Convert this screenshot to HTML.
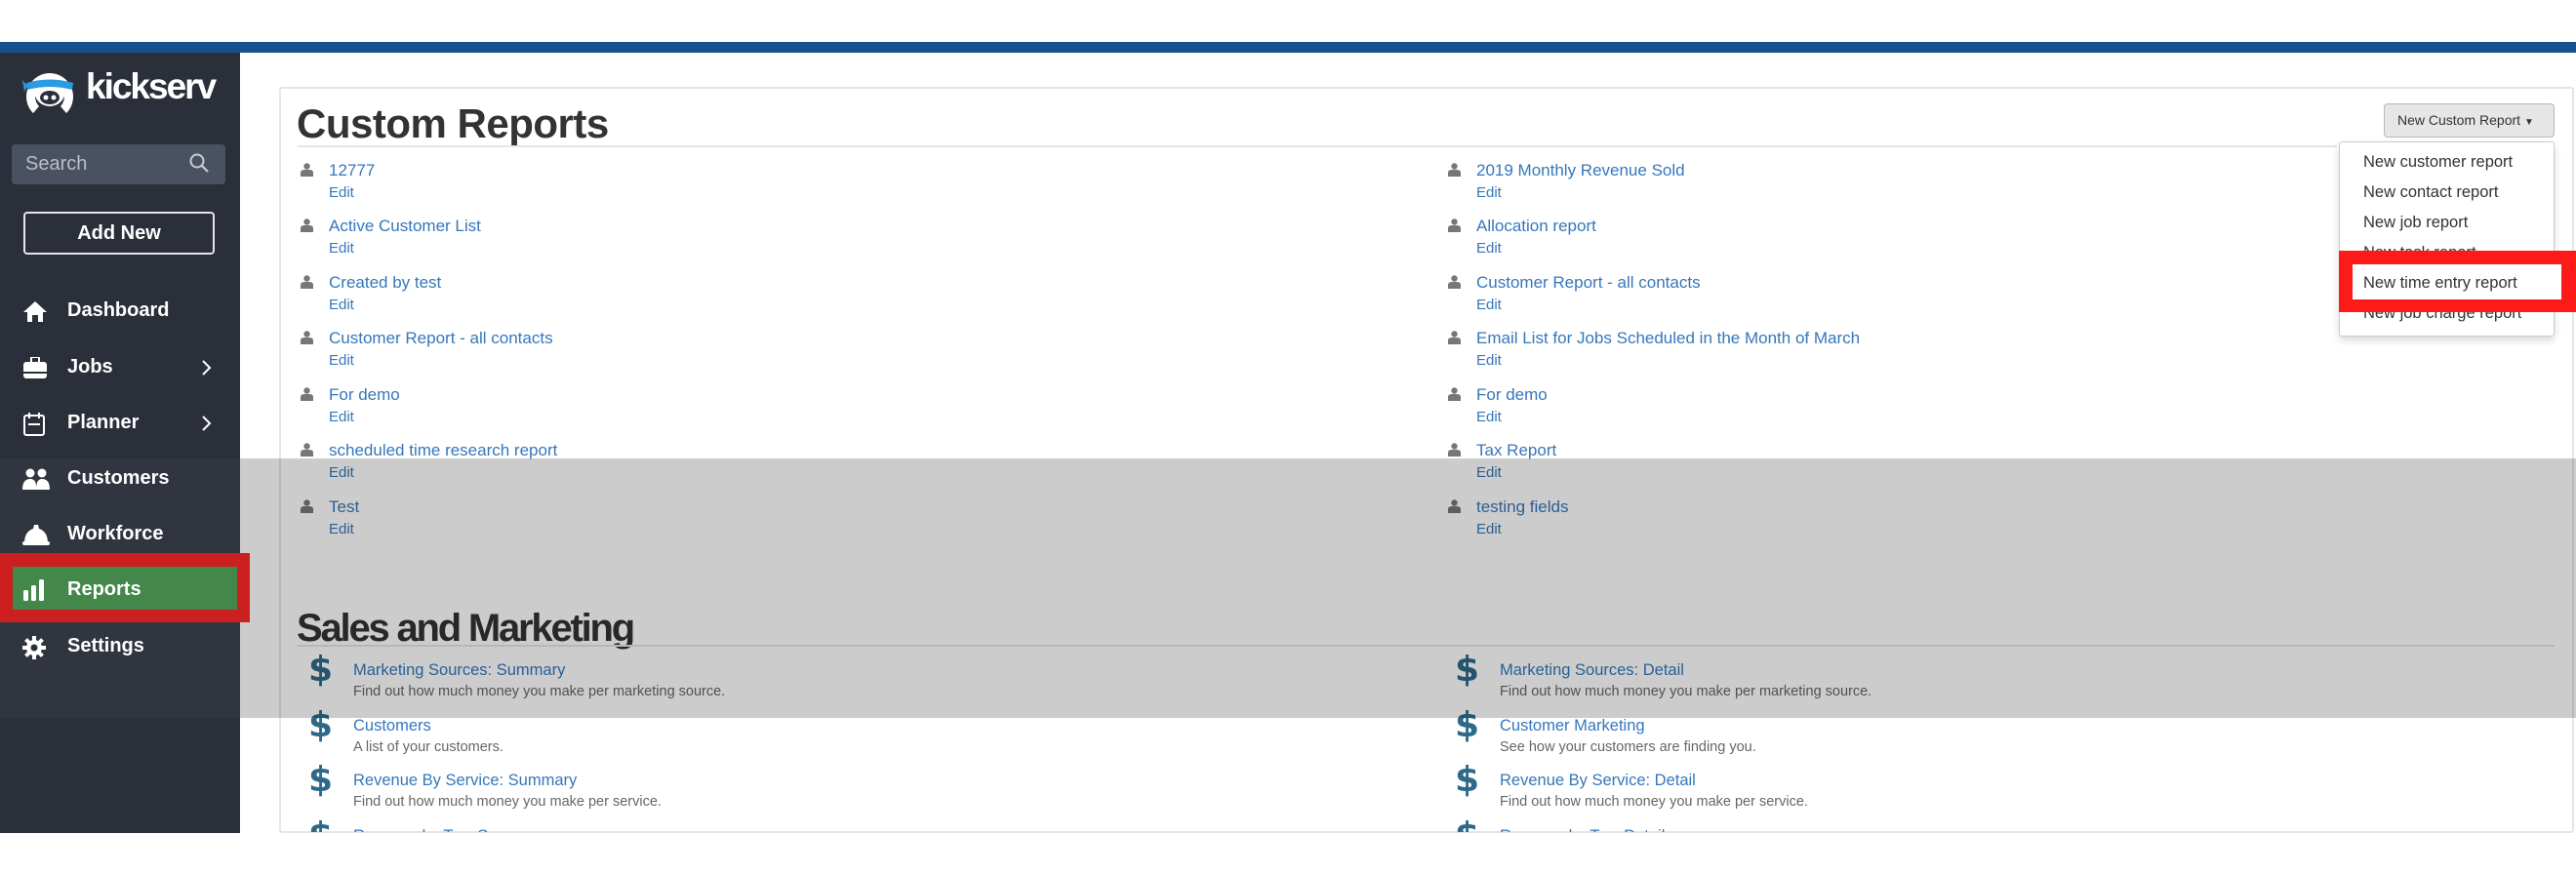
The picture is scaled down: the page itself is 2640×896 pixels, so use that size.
<!DOCTYPE html>
<html><head><meta charset="utf-8"><style>
*{margin:0;padding:0;box-sizing:border-box}
body{width:2640px;height:896px;position:relative;overflow:hidden;background:#fff;font-family:"Liberation Sans",sans-serif}
.abs{position:absolute}
#bar{left:0;top:43px;width:2640px;height:11px;background:#15508f}
#side{left:0;top:54px;width:246px;height:800px;background:#2a2f3a}
.nav{position:absolute;left:0;width:246px;height:40px;color:#fff;font-size:20px;font-weight:bold;line-height:40px}
.nav span{position:absolute;left:69px}
.nav svg{position:absolute;left:23px;top:10px}
.nav .chev{position:absolute;left:206px;top:12px}
#panel{left:286px;top:89px;width:2352px;height:765px;border:2px solid #e3e5ee;border-radius:3px;background:#fff}
h1{position:absolute;font-size:40px;font-weight:bold;color:#333;letter-spacing:-0.5px}
.rule{position:absolute;height:2px;background:#e5e5e5}
.it{position:absolute}
.it .p{position:absolute;left:0;top:-9px}
.it a{position:absolute;left:29px;top:-11px;white-space:nowrap;font-size:17px;color:#3577bb;text-decoration:none}
.it b{position:absolute;left:29px;top:13px;font-weight:normal;font-size:15px;color:#3577bb}
.sm{position:absolute}
.sm i{position:absolute;left:0;top:-22px;font-style:normal;font-weight:bold;font-size:36px;color:#2d6a8a;font-family:"DejaVu Sans",sans-serif}
.sm a{position:absolute;left:46px;top:-10px;font-size:16.5px;color:#3577bb;white-space:nowrap}
.sm span{position:absolute;left:46px;top:13px;font-size:14.5px;color:#666;white-space:nowrap}
.dd{position:absolute;left:2422px;font-size:16.5px;color:#333;white-space:nowrap}
</style></head><body>
<div id="bar" class="abs"></div>
<div id="side" class="abs"></div>
<!-- logo -->
<svg class="abs" style="left:22px;top:66px" width="58" height="54" viewBox="0 0 58 54">
<path d="M12 50 A24 24 0 1 1 46 50 L40 43 A15 15 0 1 0 18 43 Z" fill="#fff"/>
<circle cx="29" cy="27" r="16" fill="#fff"/>
<path d="M5 19 Q29 12 53 19 L52 26 Q29 20 6 26 Z" fill="#2a9be0"/>
<path d="M6 22 L1 16 L3 28 Z" fill="#2a9be0"/>
<ellipse cx="29" cy="34" rx="10" ry="7" fill="#2a2f3a"/>
<circle cx="25" cy="34" r="2.5" fill="#fff"/><circle cx="33" cy="34" r="2.5" fill="#fff"/>
</svg>
<div class="abs" style="left:88px;top:68px;color:#fff;font-size:37px;font-weight:bold;letter-spacing:-2px">kickserv</div>
<div class="abs" style="left:12px;top:148px;width:219px;height:41px;background:#4a5262;border-radius:4px"></div>
<div class="abs" style="left:26px;top:157px;color:#b9bec8;font-size:20px">Search</div>
<svg class="abs" style="left:193px;top:156px" width="22" height="22" viewBox="0 0 22 22"><circle cx="9" cy="9" r="6.5" stroke="#c8ccd4" stroke-width="2" fill="none"/><path d="M14 14 L20 20" stroke="#c8ccd4" stroke-width="2.2"/></svg>
<div class="abs" style="left:24px;top:217px;width:196px;height:44px;border:2px solid #e6e6e6;border-radius:4px;color:#fff;font-size:20px;font-weight:bold;text-align:center;line-height:40px">Add New</div>

<div class="nav" style="top:298px"><svg width="26" height="22" viewBox="0 0 26 22"><path d="M13 1 L25 12 L21 12 L21 22 L16 22 L16 15 L10 15 L10 22 L5 22 L5 12 L1 12 Z" fill="#fff"/></svg><span>Dashboard</span></div>
<div class="nav" style="top:356px"><svg width="26" height="24" viewBox="0 0 26 24"><rect x="9" y="0" width="8" height="6" rx="1" fill="none" stroke="#fff" stroke-width="2"/><rect x="1" y="5" width="24" height="17" rx="3" fill="#fff"/><rect x="1" y="15" width="24" height="2" fill="#2a2f3a"/></svg><span>Jobs</span><svg class="chev" width="12" height="18" viewBox="0 0 12 18"><path d="M2 2 L9 9 L2 16" stroke="#fff" stroke-width="2" fill="none"/></svg></div>
<div class="nav" style="top:413px"><svg width="24" height="24" viewBox="0 0 24 24"><rect x="2" y="3" width="20" height="20" rx="2" fill="none" stroke="#fff" stroke-width="2"/><path d="M7 0V6M17 0V6M6 12H18" stroke="#fff" stroke-width="2"/></svg><span>Planner</span><svg class="chev" width="12" height="18" viewBox="0 0 12 18"><path d="M2 2 L9 9 L2 16" stroke="#fff" stroke-width="2" fill="none"/></svg></div>
<div class="nav" style="top:470px"><svg width="28" height="22" viewBox="0 0 28 22"><circle cx="8" cy="5" r="4.5" fill="#fff"/><circle cx="20" cy="5" r="4.5" fill="#fff"/><path d="M0 22 Q0 11 8 11 Q15 11 14 22Z M14 22 Q14 11 20 11 Q28 11 28 22Z" fill="#fff"/></svg><span>Customers</span></div>
<div class="nav" style="top:527px"><svg width="28" height="22" viewBox="0 0 28 22"><path d="M2 20 Q2 8 11 5 L12 1 L16 1 L17 5 Q26 8 26 20 Z" fill="#fff"/><rect x="0" y="18" width="28" height="4" rx="2" fill="#fff"/></svg><span>Workforce</span></div>
<div class="abs" style="left:0;top:470px;width:246px;height:266px;background:rgba(255,255,255,0.03)"></div>
<div class="nav" style="top:642px"><svg width="24" height="24" viewBox="0 0 24 24"><g fill="#fff"><circle cx="12" cy="12" r="8"/><rect x="10" y="0" width="4" height="24"/><rect x="0" y="10" width="24" height="4"/><rect x="10" y="0" width="4" height="24" transform="rotate(45 12 12)"/><rect x="10" y="0" width="4" height="24" transform="rotate(-45 12 12)"/></g><circle cx="12" cy="12" r="3.5" fill="#2a2f3a"/></svg><span>Settings</span></div>

<div id="panel" class="abs"></div>
<h1 style="left:304px;top:103px;font-size:42px">Custom Reports</h1>
<div class="rule" style="left:305px;top:149px;width:2090px"></div>

<div class="it" style="left:308px;top:176px"><svg class="p" width="13" height="14"><circle cx="6.5" cy="3.5" r="3.2" fill="#777"/><path d="M0 14 L0 10 Q0 7 4 7 L9 7 Q13 7 13 10 L13 14Z" fill="#777"/></svg><a>12777</a><b>Edit</b></div>
<div class="it" style="left:308px;top:233px"><svg class="p" width="13" height="14"><circle cx="6.5" cy="3.5" r="3.2" fill="#777"/><path d="M0 14 L0 10 Q0 7 4 7 L9 7 Q13 7 13 10 L13 14Z" fill="#777"/></svg><a>Active Customer List</a><b>Edit</b></div>
<div class="it" style="left:308px;top:291px"><svg class="p" width="13" height="14"><circle cx="6.5" cy="3.5" r="3.2" fill="#777"/><path d="M0 14 L0 10 Q0 7 4 7 L9 7 Q13 7 13 10 L13 14Z" fill="#777"/></svg><a>Created by test</a><b>Edit</b></div>
<div class="it" style="left:308px;top:348px"><svg class="p" width="13" height="14"><circle cx="6.5" cy="3.5" r="3.2" fill="#777"/><path d="M0 14 L0 10 Q0 7 4 7 L9 7 Q13 7 13 10 L13 14Z" fill="#777"/></svg><a>Customer Report - all contacts</a><b>Edit</b></div>
<div class="it" style="left:308px;top:406px"><svg class="p" width="13" height="14"><circle cx="6.5" cy="3.5" r="3.2" fill="#777"/><path d="M0 14 L0 10 Q0 7 4 7 L9 7 Q13 7 13 10 L13 14Z" fill="#777"/></svg><a>For demo</a><b>Edit</b></div>
<div class="it" style="left:308px;top:463px"><svg class="p" width="13" height="14"><circle cx="6.5" cy="3.5" r="3.2" fill="#777"/><path d="M0 14 L0 10 Q0 7 4 7 L9 7 Q13 7 13 10 L13 14Z" fill="#777"/></svg><a>scheduled time research report</a><b>Edit</b></div>
<div class="it" style="left:308px;top:521px"><svg class="p" width="13" height="14"><circle cx="6.5" cy="3.5" r="3.2" fill="#777"/><path d="M0 14 L0 10 Q0 7 4 7 L9 7 Q13 7 13 10 L13 14Z" fill="#777"/></svg><a>Test</a><b>Edit</b></div>

<div class="it" style="left:1484px;top:176px"><svg class="p" width="13" height="14"><circle cx="6.5" cy="3.5" r="3.2" fill="#777"/><path d="M0 14 L0 10 Q0 7 4 7 L9 7 Q13 7 13 10 L13 14Z" fill="#777"/></svg><a>2019 Monthly Revenue Sold</a><b>Edit</b></div>
<div class="it" style="left:1484px;top:233px"><svg class="p" width="13" height="14"><circle cx="6.5" cy="3.5" r="3.2" fill="#777"/><path d="M0 14 L0 10 Q0 7 4 7 L9 7 Q13 7 13 10 L13 14Z" fill="#777"/></svg><a>Allocation report</a><b>Edit</b></div>
<div class="it" style="left:1484px;top:291px"><svg class="p" width="13" height="14"><circle cx="6.5" cy="3.5" r="3.2" fill="#777"/><path d="M0 14 L0 10 Q0 7 4 7 L9 7 Q13 7 13 10 L13 14Z" fill="#777"/></svg><a>Customer Report - all contacts</a><b>Edit</b></div>
<div class="it" style="left:1484px;top:348px"><svg class="p" width="13" height="14"><circle cx="6.5" cy="3.5" r="3.2" fill="#777"/><path d="M0 14 L0 10 Q0 7 4 7 L9 7 Q13 7 13 10 L13 14Z" fill="#777"/></svg><a>Email List for Jobs Scheduled in the Month of March</a><b>Edit</b></div>
<div class="it" style="left:1484px;top:406px"><svg class="p" width="13" height="14"><circle cx="6.5" cy="3.5" r="3.2" fill="#777"/><path d="M0 14 L0 10 Q0 7 4 7 L9 7 Q13 7 13 10 L13 14Z" fill="#777"/></svg><a>For demo</a><b>Edit</b></div>
<div class="it" style="left:1484px;top:463px"><svg class="p" width="13" height="14"><circle cx="6.5" cy="3.5" r="3.2" fill="#777"/><path d="M0 14 L0 10 Q0 7 4 7 L9 7 Q13 7 13 10 L13 14Z" fill="#777"/></svg><a>Tax Report</a><b>Edit</b></div>
<div class="it" style="left:1484px;top:521px"><svg class="p" width="13" height="14"><circle cx="6.5" cy="3.5" r="3.2" fill="#777"/><path d="M0 14 L0 10 Q0 7 4 7 L9 7 Q13 7 13 10 L13 14Z" fill="#777"/></svg><a>testing fields</a><b>Edit</b></div>

<h1 style="left:304px;top:622px;letter-spacing:-2.2px">Sales and Marketing</h1>
<div class="rule" style="left:305px;top:661px;width:2313px"></div>

<div class="abs" style="left:287px;top:600px;width:2349px;height:253px;overflow:hidden">
<div style="position:absolute;left:-287px;top:-600px">
<div class="sm" style="left:316px;top:688px"><i>$</i><a>Marketing Sources: Summary</a><span>Find out how much money you make per marketing source.</span></div>
<div class="sm" style="left:316px;top:745px"><i>$</i><a>Customers</a><span>A list of your customers.</span></div>
<div class="sm" style="left:316px;top:801px"><i>$</i><a>Revenue By Service: Summary</a><span>Find out how much money you make per service.</span></div>
<div class="sm" style="left:316px;top:858px"><i>$</i><a>Revenue by Tax: Summary</a><span></span></div>
<div class="sm" style="left:1491px;top:688px"><i>$</i><a>Marketing Sources: Detail</a><span>Find out how much money you make per marketing source.</span></div>
<div class="sm" style="left:1491px;top:745px"><i>$</i><a>Customer Marketing</a><span>See how your customers are finding you.</span></div>
<div class="sm" style="left:1491px;top:801px"><i>$</i><a>Revenue By Service: Detail</a><span>Find out how much money you make per service.</span></div>
<div class="sm" style="left:1491px;top:858px"><i>$</i><a>Revenue by Tax: Detail</a><span></span></div>
</div></div>

<!-- dropdown -->
<div class="abs" style="left:2443px;top:106px;width:175px;height:35px;background:#e6e6e6;border:1px solid #b8b8b8;border-radius:4px;font-size:14px;color:#333;line-height:33px;padding-left:13px;white-space:nowrap">New Custom Report <span style="font-size:10px">▼</span></div>
<div class="abs" style="left:2397px;top:145px;width:221px;height:200px;background:#fff;border:1px solid #ccc;border-radius:3px;box-shadow:0 4px 8px rgba(0,0,0,.15)"></div>
<div class="dd" style="top:157px">New customer report</div>
<div class="dd" style="top:188px">New contact report</div>
<div class="dd" style="top:219px">New job report</div>
<div class="dd" style="top:250px">New task report</div>
<div class="dd" style="top:312px">New job charge report</div>
<div class="abs" style="left:2397px;top:257px;width:243px;height:63px;background:#ff1a1a"></div>
<div class="abs" style="left:2411px;top:271px;width:214px;height:36px;background:#fff"></div>
<div class="dd" style="top:281px">New time entry report</div>

<!-- overlay -->
<div class="abs" style="left:246px;top:470px;width:2394px;height:266px;background:rgba(0,0,0,0.2)"></div>

<div class="abs" style="left:0;top:567px;width:256px;height:71px;background:#cc1f1f"></div>
<div class="abs" style="left:13px;top:581px;width:230px;height:44px;background:#43874a"></div>
<div class="nav" style="top:584px"><svg width="24" height="22" viewBox="0 0 24 22"><rect x="1" y="11" width="5" height="11" rx="1.5" fill="#fff"/><rect x="9" y="6" width="5" height="16" rx="1.5" fill="#fff"/><rect x="17" y="0" width="5" height="22" rx="1.5" fill="#fff"/></svg><span>Reports</span></div>
</body></html>
